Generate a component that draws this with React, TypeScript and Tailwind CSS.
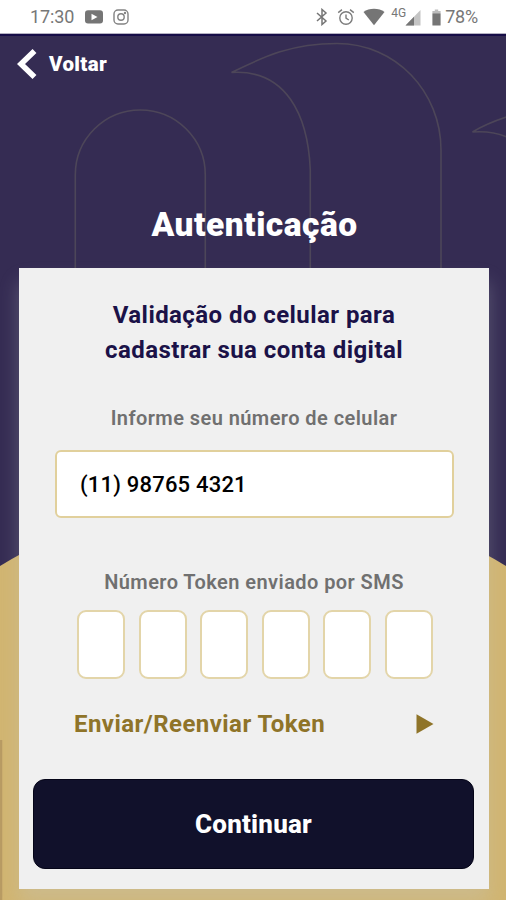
function StatusBar() {
  return (
    <header className="relative z-10 flex h-[33px] shrink-0 items-center bg-white pt-[1px] text-[#777]">
      <span className="ml-[30px] w-[54px] text-[18px] leading-none tracking-[-0.1px]">17:30</span>
      <svg className="h-[14px] w-[20px]" viewBox="0 0 20 14">
        <rect x="1" y="0.3" width="18" height="13.2" rx="3" fill="#757575" />
        <path d="M7.5 3.8 L13.5 7 L7.5 10.2 Z" fill="#fff" />
      </svg>
      <svg className="ml-[9px] h-[16px] w-[16px]" viewBox="0 0 16 16" fill="none" stroke="#828282" strokeWidth="1.4">
        <rect x="1" y="1" width="14" height="14" rx="4" />
        <circle cx="8" cy="8" r="3.2" />
        <circle cx="12" cy="4" r="0.5" />
      </svg>
      <div className="ml-auto flex items-center pr-[28px]">
        <svg className="h-[18px] w-[12px]" viewBox="0 0 12 18" fill="none" stroke="#757575" strokeWidth="1.5">
          <path d="M1 5 L10 13 L6 16.5 V1.5 L10 5 L1 13" />
        </svg>
        <svg className="ml-[9px] h-[18px] w-[18px]" viewBox="0 0 18 18" fill="none" stroke="#7c7c7c" strokeWidth="1.4">
          <circle cx="9" cy="10" r="6.2" />
          <path d="M9 6.5 V10.2 L11.8 12 M1.2 4.6 L5 1.6 M16.8 4.6 L13 1.6" />
        </svg>
        <svg className="ml-[8px] h-[18px] w-[22px]" viewBox="0 0 22 18">
          <path d="M0.5 4 C6 -0.4 16 -0.4 21.5 4 L11 17.3 Z" fill="#757575" />
        </svg>
        <span className="mb-[9px] ml-[6px] text-[12px] leading-none">4G</span>
        <svg className="ml-[-1px] h-[17px] w-[16px]" viewBox="0 0 16 17">
          <path d="M0.5 16.5 L15.5 1 V16.5 Z" fill="#c4c4c4" />
          <path d="M0.5 16.5 L9 7.7 V16.5 Z" fill="#757575" />
        </svg>
        <svg className="ml-[11px] h-[17px] w-[9px]" viewBox="0 0 9 17">
          <path d="M2.8 0.5 H6.2 V2 H8.6 V5 H0.4 V2 H2.8 Z" fill="#bdbdbd" />
          <rect x="0.4" y="4.5" width="8.2" height="12" rx="0.5" fill="#757575" />
        </svg>
        <span className="ml-[4px] text-[18px] leading-none tracking-[-0.2px]">78%</span>
      </div>
    </header>
  );
}

function Backdrop() {
  return (
    <svg className="absolute inset-0 h-[900px] w-[506px]" viewBox="0 0 506 900">
      <rect width="506" height="900" fill="#352c53" />
      <rect y="33" width="506" height="1" fill="#b5b2c2" />
      <rect y="34" width="506" height="2" fill="#160d47" />
      <g fill="none" stroke="#4d4659" strokeWidth="1.6">
        <path d="M75.3 290 V175 A65 65 0 0 1 205.3 175 V290" />
        <path d="M310.3 290 V170 C308 115 286 69 231.5 72.5 C265 56 292 43.5 337 43.5 C396 43.5 441 92 441 150 V290" />
        <path d="M508 116.5 C494 121 484 125 472.5 132 C486 131 496 132 508 137.5" />
      </g>
      <circle cx="253" cy="978.5" r="484" fill="#d1b571" />
      <rect y="740" width="2.3" height="160" fill="#b89b63" />
    </svg>
  );
}

function TokenInputs() {
  return (
    <div className="mr-[56px] ml-[58px] mt-[13px] flex h-[69px] justify-between">
      {[0, 1, 2, 3, 4, 5].map((i) => (
        <div key={i} className="w-[48px] rounded-[9px] border-2 border-[#e3d5a9] bg-white" />
      ))}
    </div>
  );
}

export default function App() {
  return (
    <div className="relative flex h-[900px] w-[506px] flex-col overflow-hidden font-['Roboto',sans-serif]">
      <Backdrop />
      <StatusBar />
      <main className="relative flex flex-col">
        <button className="mt-[11px] flex h-[40px] items-center self-start pl-[17px] text-white">
          <svg className="h-[32px] w-[21px]" viewBox="0 0 21 32">
            <path d="M17.5 3 L4 16 L17.5 29" fill="none" stroke="#fff" strokeWidth="5.6" />
          </svg>
          <span className="ml-[11px] text-[20.5px] font-black leading-none tracking-[0.35px]">Voltar</span>
        </button>
        <h1 className="mt-[121px] h-[40px] pl-[3px] text-center text-[33.5px] font-black leading-[40px] tracking-[0.5px] text-white">
          Autenticação
        </h1>
        <section className="mt-[23px] ml-[19px] flex h-[621px] w-[470px] flex-col bg-[#f0f0f0] text-center shadow-[0_14px_18px_rgba(195,200,205,0.28)]">
          <h2 className="mt-[30px] text-[24px] font-bold leading-[35px] tracking-[0.43px] text-[#1b1248]">
            Validação do celular para
            <br />
            cadastrar sua conta digital
          </h2>
          <label className="mt-[35px] text-[20px] font-semibold leading-[30px] tracking-[0.43px] text-[#707070]">
            Informe seu número de celular
          </label>
          <div className="mr-[35px] ml-[36px] mt-[17px] flex h-[68px] items-center rounded-[6px] border-2 border-[#e1d09c] bg-white pl-[23px] text-[22px] font-medium tracking-[0.2px] text-black">
            (11) 98765 4321
          </div>
          <label className="mt-[49px] text-[20px] font-semibold leading-[30px] tracking-[0.43px] text-[#707070]">
            Número Token enviado por SMS
          </label>
          <TokenInputs />
          <button className="mt-[25px] mr-[55px] ml-[55px] flex h-[40px] items-center justify-between text-[24px] font-bold tracking-[0.45px] text-[#8f7429]">
            <span>Enviar/Reenviar Token</span>
            <svg className="h-[20px] w-[18px]" viewBox="0 0 18 20">
              <path d="M0.5 0.3 L17.5 10 L0.5 19.7 Z" fill="#8f7429" />
            </svg>
          </button>
          <button className="mr-[15px] ml-[14px] mt-[35px] h-[90px] rounded-[12px] border border-[#050518] bg-[#11112b] text-[26px] font-extrabold tracking-[0.2px] text-white">
            Continuar
          </button>
        </section>
      </main>
    </div>
  );
}
